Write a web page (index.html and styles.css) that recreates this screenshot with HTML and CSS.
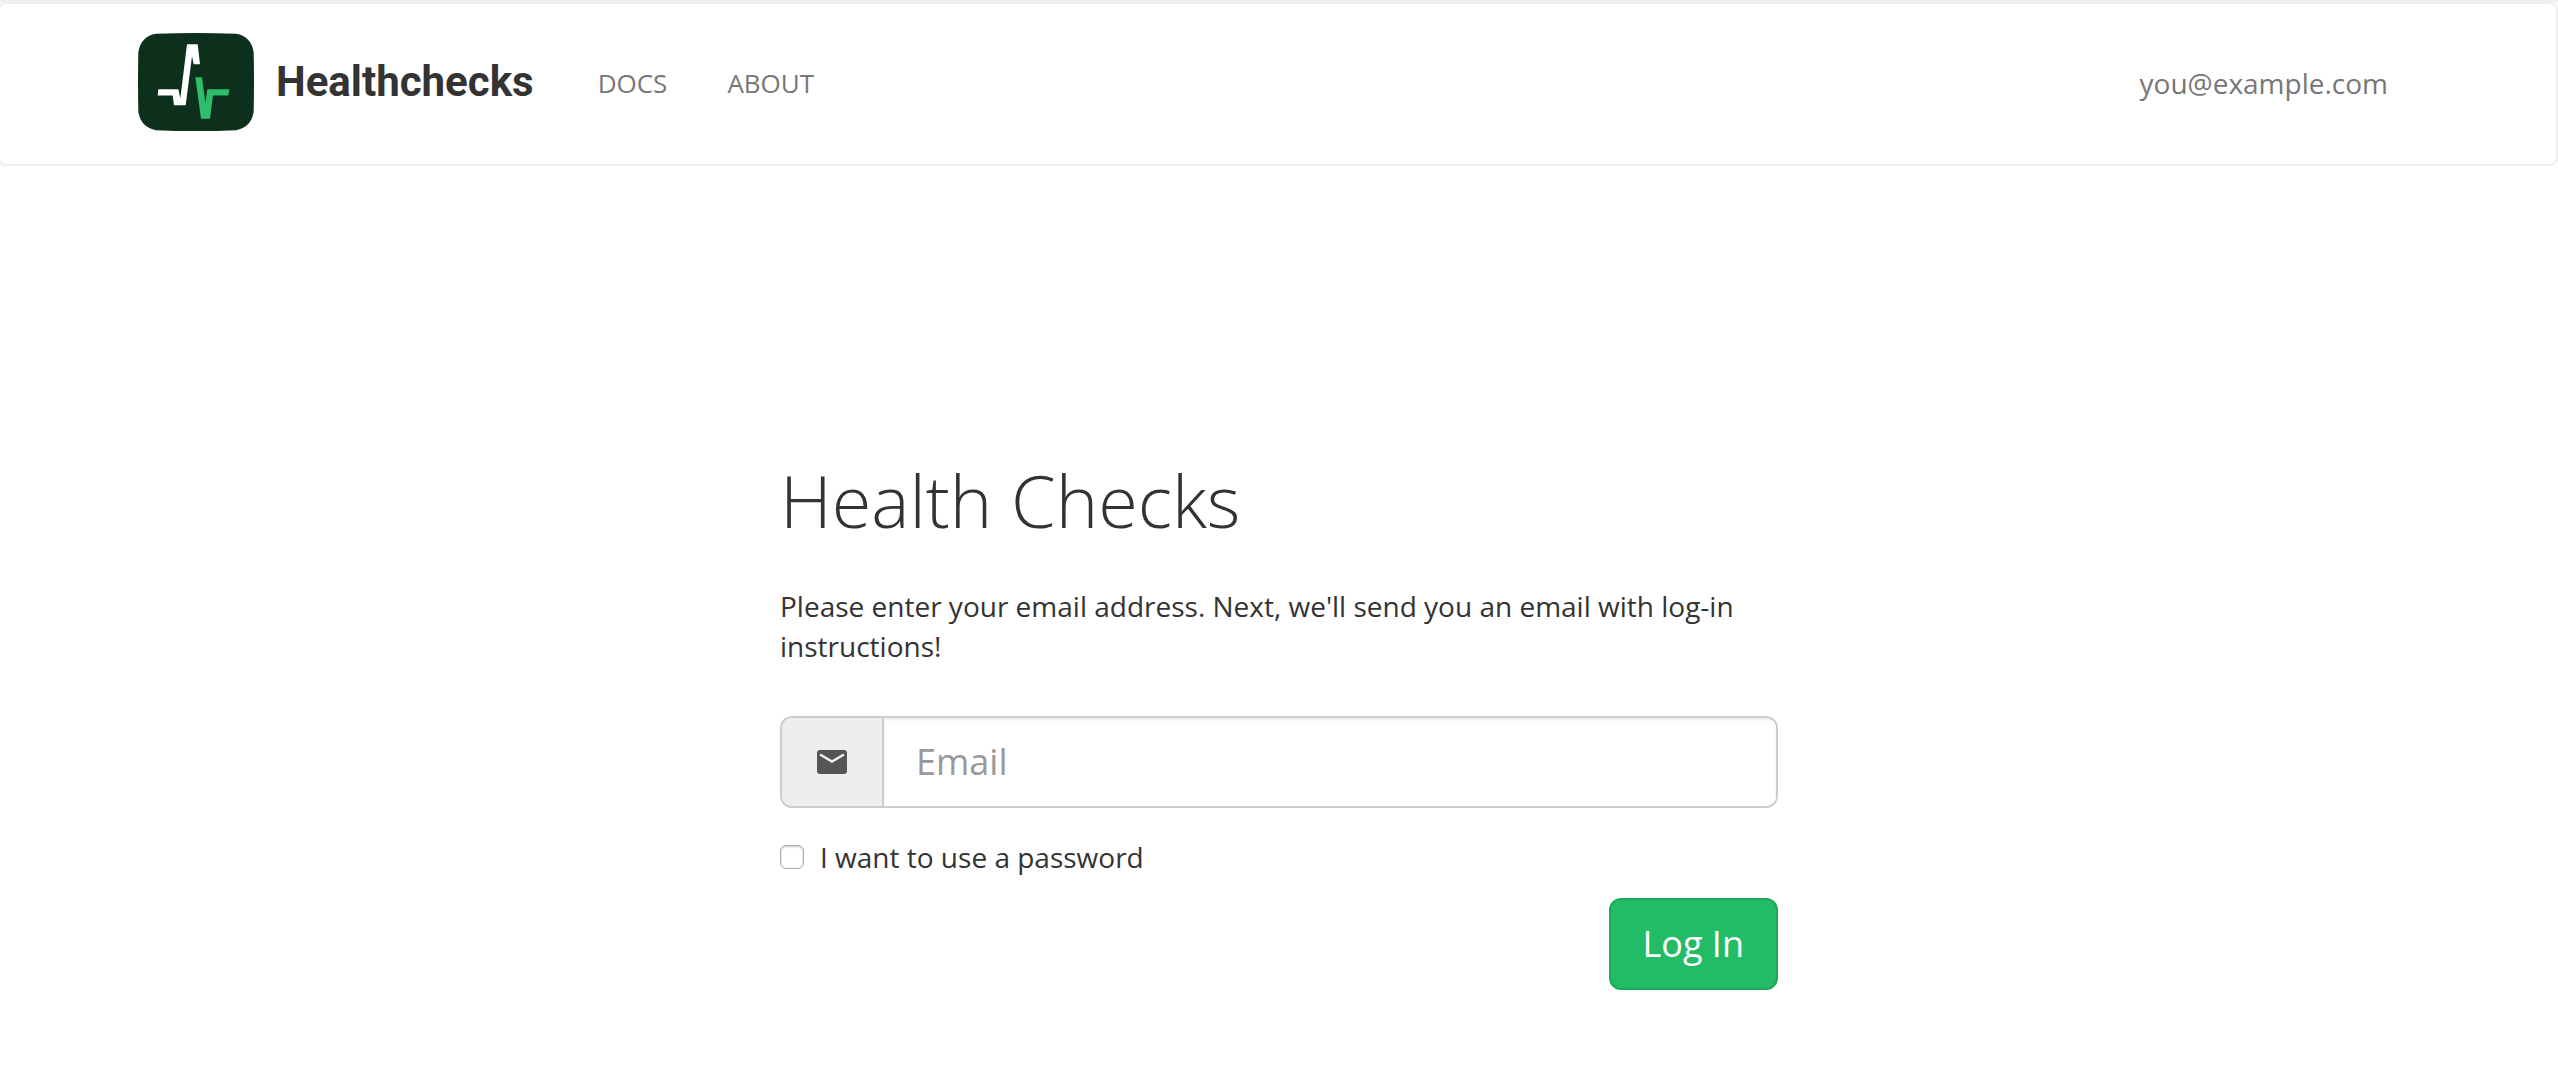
FILE: index.html
```html
<!DOCTYPE html>
<html lang="en">
<head>
<meta charset="utf-8">
<meta name="viewport" content="width=device-width, initial-scale=1">
<title>Health Checks</title>
<link rel="stylesheet" href="styles.css">
</head>
<body>
<header class="navbar">
  <div class="navbar-inner">
    <a class="brand" href="#">
      <svg class="brand-logo" viewBox="58 98 348 295" aria-hidden="true">
        <path fill="#0d301d" d="M112 101Q232 96 352 101Q397 108 405 156Q407 245 405 335Q397 383 352 390Q232 395 112 390Q67 383 59 335Q57 245 59 156Q67 108 112 101Z"/>
        <path fill="#fff" d="M119 267H179L185 294L205 132H237L244 192H225L220 168L201 315H166L162 286H117Z"/>
        <path fill="#2fbc6b" d="M230 231H250L260 308L266 267H332L329 286H283L274 356H247Z"/>
      </svg>
      <span class="brand-name">Healthchecks</span>
    </a>
    <nav class="nav-links">
      <a href="#">DOCS</a>
      <a href="#">ABOUT</a>
    </nav>
    <a class="account" href="#">you@example.com</a>
  </div>
</header>
<main class="login">
  <h1>Health Checks</h1>
  <p>Please enter your email address. Next, we'll send you an email with log-in instructions!</p>
  <form>
    <div class="input-group">
      <label class="addon" for="email" aria-label="Email">
        <svg viewBox="0 0 30 24" aria-hidden="true">
          <rect width="30" height="24" rx="3" fill="#555"/>
          <path d="M3 4.500L15 11.500L27 4.500" fill="none" stroke="#eee" stroke-width="2.600"/>
        </svg>
      </label>
      <input class="email" id="email" type="email" placeholder="Email">
    </div>
    <label class="check"><input type="checkbox">I want to use a password</label>
    <button class="submit" type="submit">Log In</button>
  </form>
</main>
</body>
</html>
```
FILE: styles.css
```css
* { box-sizing: border-box; }

body {
  margin: 0;
  border-top: 2px solid #b4b4b4;
  border-image: linear-gradient(#eee 50%, #b0b4b0 50%) 2 0 0;
  background: #fff;
  color: #333;
  font: 28px/40px "Open Sans", "Noto Sans", sans-serif;
}

a { color: #777; text-decoration: none; }

.navbar {
  margin-left: -2px;
  border: 2px solid #eee;
  border-radius: 8px;
  padding: 28px 0 32px;
}

.navbar-inner {
  display: flex;
  align-items: center;
  max-width: 2340px;
  margin: 0 auto;
  padding: 0 60px 0 30px;
}

.brand { display: flex; align-items: center; gap: 22px; }
.brand-logo { width: 116px; height: 100px; }
.brand-name {
  color: #333;
  font: bold 42px/52px Roboto, "Liberation Sans", sans-serif;
}

.nav-links {
  display: flex;
  gap: 60px;
  margin-left: 64px;
  padding-top: 2px;
  font-size: 26px;
}

.account { margin-left: auto; padding-top: 2px; }

.login {
  max-width: 998px;
  margin: 0 auto;
  padding: 294px 0 78px;
}

h1 { margin: 0 0 46px; font-size: 72px; font-weight: 300; line-height: 80px; }
p { margin: 0 0 50px; }

form { display: flex; flex-direction: column; }

.input-group {
  display: flex;
  height: 92px;
  border: 2px solid #ccc;
  border-radius: 12px;
  overflow: hidden;
}

.addon {
  display: flex;
  align-items: center;
  justify-content: center;
  width: 102px;
  border-right: 2px solid #ccc;
  background: #eee;
}
.addon svg { width: 30px; height: 24px; }

.email {
  flex: 1;
  min-width: 0;
  border: 0;
  padding: 0 32px;
  background: #fff;
  box-shadow: inset 0 2px 2px rgba(0, 0, 0, .075);
  color: #555;
  font: inherit;
  font-size: 36px;
}
.email::placeholder { color: #999; }

.check {
  display: flex;
  align-items: center;
  align-self: flex-start;
  gap: 16px;
  margin: 29px 0 21px;
}
.check input {
  appearance: none;
  width: 24px;
  height: 24px;
  margin: 0;
  border: 1px solid #aaa;
  border-radius: 6px;
  background: #fff;
  box-shadow: inset 0 1px 2px rgba(0, 0, 0, .2);
}
.check input:checked { background: #22bc66; }

.submit {
  align-self: flex-end;
  height: 92px;
  padding: 0 32px;
  border: 2px solid #1fa75b;
  border-radius: 12px;
  background: #22bc66;
  color: #fff;
  font: inherit;
  font-size: 36px;
}
```
